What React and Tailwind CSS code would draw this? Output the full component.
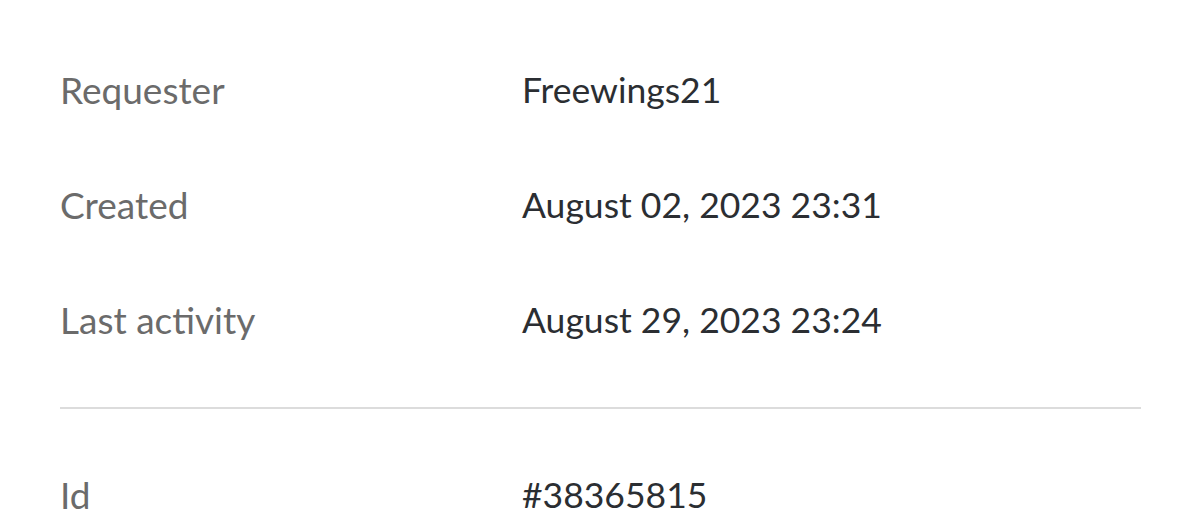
import React from 'react';

const rows = [
  { label: 'Requester', value: 'Freewings21' },
  { label: 'Created', value: 'August 02, 2023 23:31' },
  { label: 'Last activity', value: 'August 29, 2023 23:24' },
];

function Row({ label, value }) {
  return (
    <div className="flex items-center h-[115px]">
      <div className="w-[462px] shrink-0 text-[37px] text-[#6b6b6b]">{label}</div>
      <div className="text-[35.5px] text-[#2b2e32]">{value}</div>
    </div>
  );
}

export default function App() {
  return (
    <div
      className="w-[1200px] h-[527px] overflow-hidden bg-white px-[60px] pt-[32px] leading-none"
      style={{ fontFamily: 'Lato, "Noto Sans", sans-serif' }}
    >
      {rows.map((r) => (
        <Row key={r.label} {...r} />
      ))}
      <div className="mt-[30px] h-[2px] w-[1081px] bg-[#dcdcdc]" />
      <div className="mt-[28px]">
        <Row label="Id" value="#38365815" />
      </div>
    </div>
  );
}
